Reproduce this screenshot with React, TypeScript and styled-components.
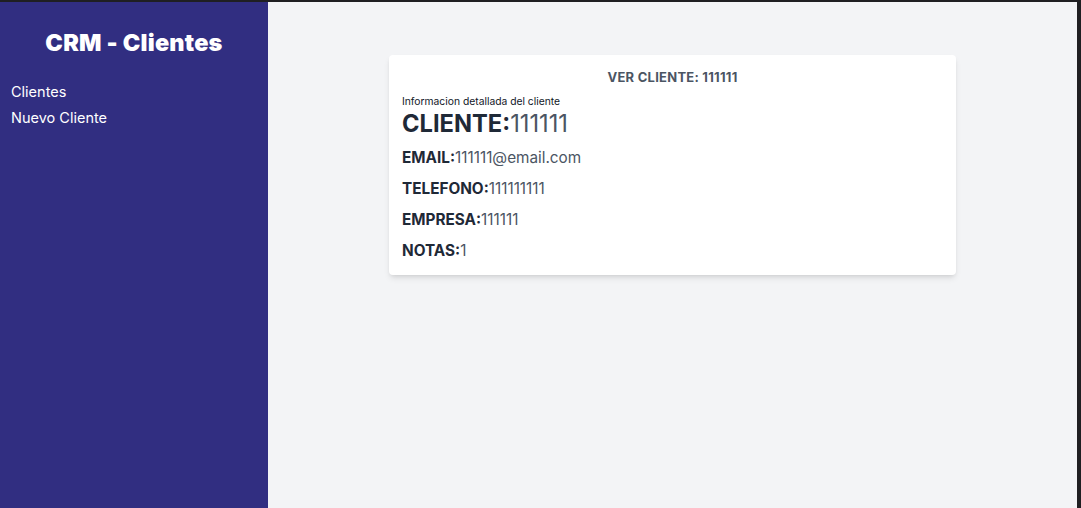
import React from "react";
import styled, { createGlobalStyle } from "styled-components";

const Global = createGlobalStyle`
  html, body { margin: 0; padding: 0; }
  body { font-family: Inter, "Noto Sans", sans-serif; background: #1f1f22; }
  * { box-sizing: border-box; }
`;

const Frame = styled.div`
  display: flex;
  flex-direction: column;
  width: 1081px;
  height: 508px;
  background: #1f1f22;
  padding-top: 2px;
  padding-right: 4px;
`;

const Layout = styled.div`
  display: flex;
  flex: 1;
  min-height: 0;
`;

const Sidebar = styled.aside`
  width: 268px;
  background: #312e81;
  padding: 27px 11px 0;
  display: flex;
  flex-direction: column;
`;

const Brand = styled.h1`
  margin: 0 0 25px;
  text-align: center;
  color: #ffffff;
  font-size: 23.5px;
  line-height: 28px;
  font-weight: 900;
  letter-spacing: 0.2px;
`;

const Nav = styled.nav`
  display: flex;
  flex-direction: column;
  gap: 6px;
`;

const NavLink = styled.a`
  color: #ffffff;
  font-size: 14.5px;
  line-height: 20px;
  text-decoration: none;
`;

const Main = styled.main`
  flex: 1;
  background: #f3f4f6;
  display: flex;
  justify-content: center;
  align-items: flex-start;
  padding-top: 53px;
`;

const Card = styled.section`
  width: 567px;
  background: #ffffff;
  border-radius: 4px;
  box-shadow: 0 4px 6px -1px rgba(0, 0, 0, 0.1), 0 2px 4px -2px rgba(0, 0, 0, 0.1);
  padding: 14px 13px 14px;
`;

const CardTitle = styled.h2`
  margin: 0 0 9px;
  text-align: center;
  font-size: 13px;
  line-height: 16px;
  font-weight: 700;
  color: #4b5563;
  letter-spacing: 0.25px;
  text-transform: uppercase;
`;

const Subtitle = styled.p`
  margin: 0;
  font-size: 10.3px;
  line-height: 14px;
  color: #111827;
`;

const Field = styled.p<{ $big?: boolean }>`
  margin: ${(p) => (p.$big ? "0 0 8px" : "0 0 11px")};
  font-size: ${(p) => (p.$big ? "23.7px" : "15.3px")};
  line-height: ${(p) => (p.$big ? "32px" : "20px")};
  color: #4b5563;
  &:last-child { margin-bottom: 0; }
`;

const Label = styled.span`
  font-weight: 700;
  color: #1f2937;
`;

export default function App() {
  return (
    <>
      <Global />
      <Frame>
        <Layout>
          <Sidebar>
            <Brand>CRM - Clientes</Brand>
            <Nav>
              <NavLink href="#">Clientes</NavLink>
              <NavLink href="#">Nuevo Cliente</NavLink>
            </Nav>
          </Sidebar>
          <Main>
            <Card>
              <CardTitle>Ver Cliente: 111111</CardTitle>
              <Subtitle>Informacion detallada del cliente</Subtitle>
              <Field $big>
                <Label>CLIENTE:</Label>111111
              </Field>
              <Field>
                <Label>EMAIL:</Label>111111@email.com
              </Field>
              <Field>
                <Label>TELEFONO:</Label>111111111
              </Field>
              <Field>
                <Label>EMPRESA:</Label>111111
              </Field>
              <Field>
                <Label>NOTAS:</Label>1
              </Field>
            </Card>
          </Main>
        </Layout>
      </Frame>
    </>
  );
}
